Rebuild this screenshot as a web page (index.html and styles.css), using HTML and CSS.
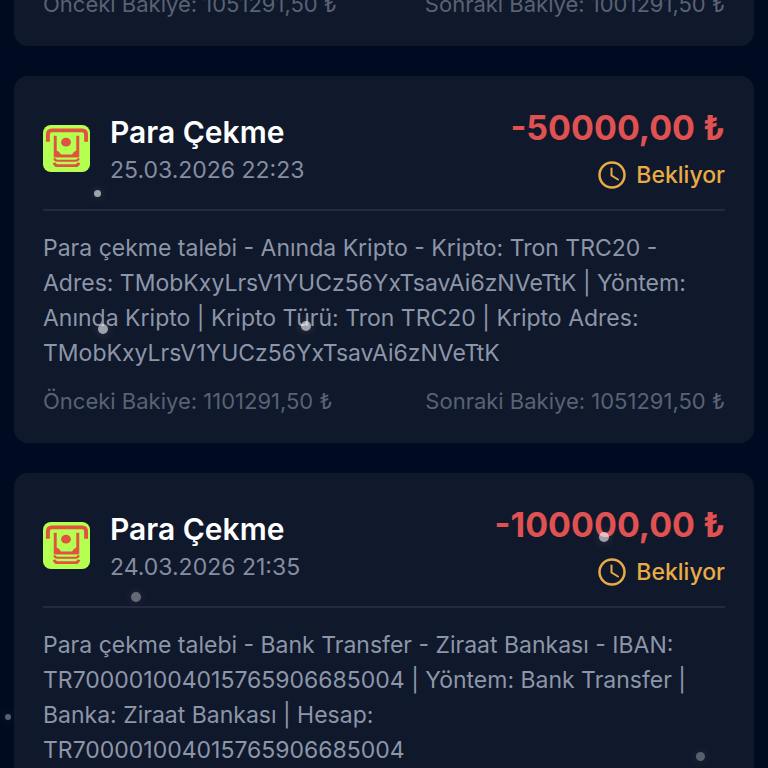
FILE: index.html
```html
<!DOCTYPE html>
<html lang="tr">
<head>
    <meta charset="UTF-8">
    <meta name="viewport" content="width=device-width, initial-scale=1.0">
    <title>İşlem Geçmişi</title>
    <link rel="stylesheet" href="styles.css">
</head>
<body>

<!-- Icons shared by every transaction -->
<svg class="icon-defs" aria-hidden="true">
    <symbol id="icon-withdraw" viewBox="0 0 48 48">
        <rect width="48" height="48" rx="8" fill="#b4ff4f"/>
        <g fill="none" stroke="#e05342">
            <path d="M5 17V10Q5 5.500 9 5.500H40Q44 5.500 44 10V17" stroke-width="4"/>
            <path d="M12.500 11V31.500H35.500V11" stroke-width="3"/>
            <path d="M11.500 34Q12 36.500 15 36.500H33Q36 36.500 36.500 34" stroke-width="2"/>
            <path d="M11.500 38.500Q12 41.500 15 41.500H33Q36 41.500 36.500 38.500" stroke-width="3"/>
        </g>
        <path d="M12 26Q17 26 18.500 31H29.500Q31 26 36 26V33H12Z" fill="#e05342"/>
        <ellipse cx="23.500" cy="17.500" rx="5" ry="4.500" fill="#e05342"/>
    </symbol>
    <symbol id="icon-clock" viewBox="0 0 28 28">
        <circle cx="14" cy="14" r="12.500" fill="none" stroke="currentColor" stroke-width="2.500"/>
        <path d="M13.500 7.500V14.500L20 18.500" fill="none" stroke="currentColor" stroke-width="2" stroke-linecap="round"/>
    </symbol>
</svg>

<main class="screen">
    <div class="list">
        <article class="card">
            <div class="balances">
                <span>Önceki Bakiye: 1051291,50 ₺</span>
                <span>Sonraki Bakiye: 1001291,50 ₺</span>
            </div>
        </article>

        <article class="card">
            <header class="card-header">
                <svg class="type-icon" aria-hidden="true"><use href="#icon-withdraw"/></svg>
                <div class="info">
                    <h2>Para Çekme</h2>
                    <time datetime="2026-03-25T22:23">25.03.2026 22:23</time>
                </div>
                <div class="summary">
                    <strong class="amount">-50000,00 ₺</strong>
                    <span class="status">
                        <svg class="status-icon" aria-hidden="true"><use href="#icon-clock"/></svg>
                        Bekliyor
                    </span>
                </div>
            </header>
            <p class="description">Para çekme talebi - Anında Kripto - Kripto: Tron TRC20 - Adres: TMobKxyLrsV1YUCz56YxTsavAi6zNVeTtK | Yöntem: Anında Kripto | Kripto Türü: Tron TRC20 | Kripto Adres: TMobKxyLrsV1YUCz56YxTsavAi6zNVeTtK</p>
            <div class="balances">
                <span>Önceki Bakiye: 1101291,50 ₺</span>
                <span>Sonraki Bakiye: 1051291,50 ₺</span>
            </div>
        </article>

        <article class="card">
            <header class="card-header">
                <svg class="type-icon" aria-hidden="true"><use href="#icon-withdraw"/></svg>
                <div class="info">
                    <h2>Para Çekme</h2>
                    <time datetime="2026-03-24T21:35">24.03.2026 21:35</time>
                </div>
                <div class="summary">
                    <strong class="amount">-100000,00 ₺</strong>
                    <span class="status">
                        <svg class="status-icon" aria-hidden="true"><use href="#icon-clock"/></svg>
                        Bekliyor
                    </span>
                </div>
            </header>
            <p class="description">Para çekme talebi - Bank Transfer - Ziraat Bankası - IBAN: TR700001004015765906685004 | Yöntem: Bank Transfer | Banka: Ziraat Bankası | Hesap: TR700001004015765906685004</p>
        </article>
    </div>

    <!-- Snow falling over the list -->
    <div class="snow" aria-hidden="true">
        <i class="flake flake-1"></i>
        <i class="flake flake-2"></i>
        <i class="flake flake-3"></i>
        <i class="flake flake-4"></i>
        <i class="flake flake-5"></i>
        <i class="flake flake-6"></i>
        <i class="flake flake-7"></i>
    </div>
</main>

</body>
</html>
```
FILE: styles.css
```css
* {
    box-sizing: border-box;
}
body {
    margin: 0;
    background: #000b22;
    color: #fff;
    font-family: Inter, "Liberation Sans", sans-serif;
}
.icon-defs {
    position: absolute;
    width: 0;
    height: 0;
}
.screen {
    position: relative;
    height: 100vh;
    overflow: hidden;
}
/* The list is scrolled part of the way down */
.list {
    display: flex;
    flex-direction: column;
    gap: 30px;
    margin-top: -38px;
    padding: 0 14px;
}
.card {
    padding: 29px;
    background: #10182b;
    border-radius: 14px;
}
.card-header {
    display: flex;
    align-items: center;
    gap: 20px;
    padding-bottom: 18px;
    border-bottom: 2px solid #232b3d;
}
.type-icon {
    flex: none;
    width: 47px;
    height: 47px;
}
.info {
    flex: 1;
    padding-top: 4px;
}
h2 {
    margin: 0 0 4px;
    font-size: 30px;
    font-weight: 600;
    line-height: 36px;
}
time {
    display: block;
    color: #858da0;
    font-size: 23px;
    line-height: 32px;
}
.summary {
    display: flex;
    flex-direction: column;
    align-items: flex-end;
    gap: 8px;
}
.amount {
    color: #e05252;
    font-size: 34px;
    font-weight: 700;
    line-height: 46px;
}
.status {
    display: flex;
    align-items: center;
    gap: 10px;
    color: #e8ab45;
    font-size: 23px;
    font-weight: 500;
    line-height: 32px;
}
.status-icon {
    width: 28px;
    height: 28px;
}
.description {
    margin: 20px 0 17px;
    color: #8d96a9;
    font-size: 23px;
    line-height: 35px;
}
.balances {
    display: flex;
    justify-content: space-between;
    color: #596274;
    font-size: 22px;
    line-height: 26px;
}
.snow {
    position: absolute;
    inset: 0;
    pointer-events: none;
}
.flake {
    position: absolute;
    width: 10px;
    height: 10px;
    border-radius: 50%;
    background: #fff;
    box-shadow: 0 0 10px rgba(255, 255, 255, 0.3);
    opacity: 0.6;
}
.flake-1 {
    left: 94px;
    top: 190px;
    width: 7px;
    height: 7px;
}
.flake-2 {
    left: 98px;
    top: 324px;
}
.flake-3 {
    left: 301px;
    top: 321px;
}
.flake-4 {
    left: 599px;
    top: 532px;
}
.flake-5 {
    left: 131px;
    top: 592px;
    opacity: 0.35;
}
.flake-6 {
    left: 5px;
    top: 714px;
    width: 6px;
    height: 6px;
    opacity: 0.35;
}
.flake-7 {
    left: 696px;
    top: 752px;
    width: 9px;
    height: 9px;
    opacity: 0.3;
}
```
